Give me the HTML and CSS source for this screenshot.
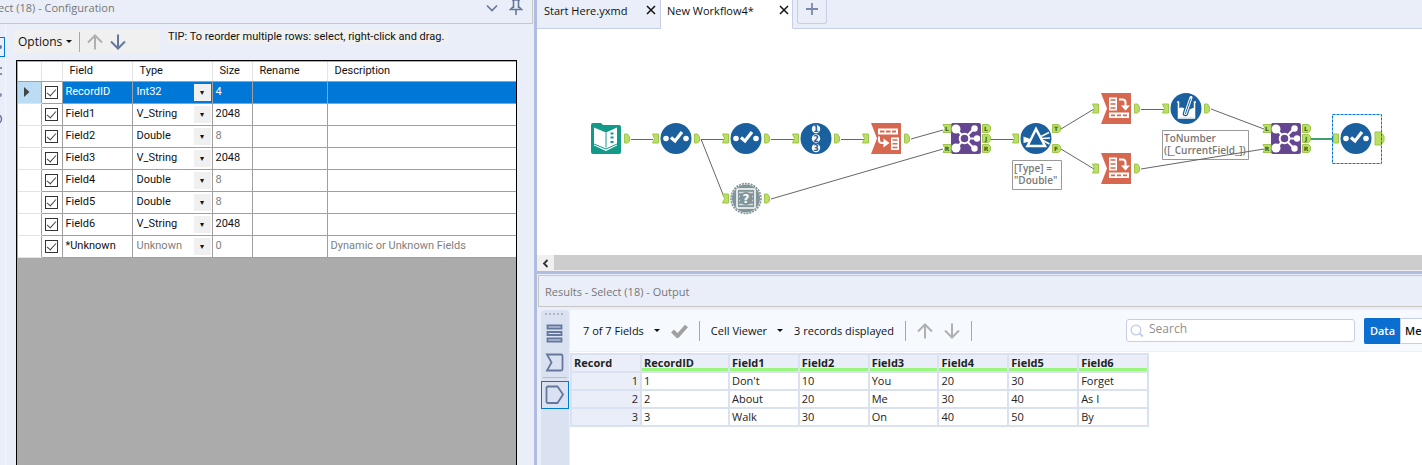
FILE: index.html
```html
<!DOCTYPE html>
<html lang="en">
<head>
<meta charset="utf-8">
<title>Workflow Designer</title>
<link rel="stylesheet" href="styles.css">
</head>
<body>
<div class="app">
  <section class="config">
    <header class="config-head">
      <span class="config-title">Select (18) - Configuration</span>
      <button class="icon-btn" aria-label="Collapse"><svg width="12" height="8"><path d="M1 1.500 6 6.500 11 1.500" fill="none" stroke="#66779d" stroke-width="1.600"/></svg></button>
      <button class="icon-btn" aria-label="Pin"><svg width="14" height="17"><path d="M3 1h8M4.500 1v8M9.500 1v8M4.500 7.500 1.500 10.500h11L9.500 7.500M7 10.500V16" fill="none" stroke="#66779d" stroke-width="1.600"/></svg></button>
    </header>
    <div class="config-body">
      <nav class="rail">
        <button class="rail-btn rail-on" aria-label="Configuration"><svg width="5" height="18"><circle cx="0" cy="9" r="2" fill="#66779d"/></svg></button>
        <button class="rail-btn" aria-label="Annotation"><svg width="5" height="18"><path d="M0 6h2M0 12h2" stroke="#8592ae" stroke-width="2"/></svg></button>
        <button class="rail-btn" aria-label="XML"><svg width="5" height="18"><circle cx="0" cy="9" r="2" fill="#8592ae"/></svg></button>
        <button class="rail-btn" aria-label="Help"><svg width="5" height="18"><circle cx="-3" cy="9" r="4.500" fill="none" stroke="#66779d" stroke-width="1.500"/></svg></button>
      </nav>
      <div class="config-main">
        <div class="config-tools">
          <div class="options-bar">
            <button class="menu-btn">Options<i class="caret"></i></button>
            <span class="rule"></span>
            <button class="icon-btn" aria-label="Move up"><svg width="16" height="16"><path d="M8 15.500V2M1 8.500 8 1.500l7 7" fill="none" stroke="#b0b0b0" stroke-width="2"/></svg></button>
            <button class="icon-btn" aria-label="Move down"><svg width="16" height="16"><path d="M8 .5V14M1 7.500l7 7 7-7" fill="none" stroke="#66779d" stroke-width="2"/></svg></button>
          </div>
          <p class="tip">TIP: To reorder multiple rows: select, right-click and drag.</p>
        </div>
        <div class="grid-box">
          <table class="fields">
            <colgroup><col class="c-mark"><col class="c-check"><col class="c-field"><col class="c-type"><col class="c-size"><col class="c-rename"><col></colgroup>
            <thead><tr><th></th><th></th><th>Field</th><th>Type</th><th>Size</th><th>Rename</th><th>Description</th></tr></thead>
            <tbody>
              <tr class="current"><td class="mark"><svg width="6" height="10"><path d="M0 0l5.500 5L0 10z" fill="#444"/></svg></td><td><input type="checkbox" aria-label="RecordID" checked></td><td>RecordID</td><td><div class="pick"><select aria-label="Type of RecordID"><option>Int32</option></select></div></td><td>4</td><td></td><td></td></tr>
              <tr><td class="mark"></td><td><input type="checkbox" aria-label="Field1" checked></td><td>Field1</td><td><div class="pick"><select aria-label="Type of Field1"><option>V_String</option></select></div></td><td>2048</td><td></td><td></td></tr>
              <tr><td class="mark"></td><td><input type="checkbox" aria-label="Field2" checked></td><td>Field2</td><td><div class="pick"><select aria-label="Type of Field2"><option>Double</option></select></div></td><td class="dim">8</td><td></td><td></td></tr>
              <tr><td class="mark"></td><td><input type="checkbox" aria-label="Field3" checked></td><td>Field3</td><td><div class="pick"><select aria-label="Type of Field3"><option>V_String</option></select></div></td><td>2048</td><td></td><td></td></tr>
              <tr><td class="mark"></td><td><input type="checkbox" aria-label="Field4" checked></td><td>Field4</td><td><div class="pick"><select aria-label="Type of Field4"><option>Double</option></select></div></td><td class="dim">8</td><td></td><td></td></tr>
              <tr><td class="mark"></td><td><input type="checkbox" aria-label="Field5" checked></td><td>Field5</td><td><div class="pick"><select aria-label="Type of Field5"><option>Double</option></select></div></td><td class="dim">8</td><td></td><td></td></tr>
              <tr><td class="mark"></td><td><input type="checkbox" aria-label="Field6" checked></td><td>Field6</td><td><div class="pick"><select aria-label="Type of Field6"><option>V_String</option></select></div></td><td>2048</td><td></td><td></td></tr>
              <tr><td class="mark"></td><td><input type="checkbox" aria-label="Unknown" checked></td><td>*Unknown</td><td class="dim"><div class="pick"><select aria-label="Type of Unknown"><option>Unknown</option></select></div></td><td class="dim">0</td><td></td><td class="dim">Dynamic or Unknown Fields</td></tr>
            </tbody>
          </table>
        </div>
      </div>
    </div>
  </section>

  <main class="work">
    <nav class="tabs">
      <div class="tab"><a href="#start">Start Here.yxmd</a><button class="icon-btn" aria-label="Close Start Here"><svg width="10" height="10"><path d="M1 1l8 8M9 1 1 9" stroke="#111" stroke-width="1.500"/></svg></button></div>
      <div class="tab tab-on"><a href="#flow">New Workflow4*</a><button class="icon-btn" aria-label="Close New Workflow4"><svg width="10" height="10"><path d="M1 1l8 8M9 1 1 9" stroke="#111" stroke-width="1.500"/></svg></button></div>
      <div class="tab-rest"><button class="add-tab" aria-label="New tab"><svg width="14" height="14"><path d="M7 1v12M1 7h12" stroke="#7b8aa8" stroke-width="1.800"/></svg></button></div>
    </nav>
    <div class="canvas">
      <svg class="flow" width="885" height="226" viewBox="537 29 885 226" role="img" aria-label="Workflow">
        <defs>
          <path id="out" d="M18.500-4.500h3l2 3v4l-2 2h-3z" class="port"/>
          <path id="in" d="M-23.500-4.500h6v9h-6l2-4.500z" class="port"/>
          <g id="select">
            <circle r="15.500" class="blue"/>
            <circle cx="-10" cy="0" r="2.800" fill="#fff"/><circle cx="10" cy="0" r="2.800" fill="#fff"/>
            <path d="M-5-1 -1 2.500 6-6.500" fill="none" stroke="#fff" stroke-width="3.200"/>
          </g>
          <g id="join">
            <rect x="-15" y="-15.500" width="30" height="31" rx="2" fill="#644691"/>
            <path d="M-1.500 0-10-10M-1.500 0-10 10M-1.500 0 8-10M-1.500 0H11M-1.500 0 8 10" stroke="#fff" stroke-width="2"/>
            <circle cx="-10" cy="-9.500" r="4.500" fill="#fff"/><circle cx="-10" cy="9.500" r="4.500" fill="#fff"/>
            <circle cx="8.500" cy="-10" r="3.200" fill="#fff"/><circle cx="11" cy="0" r="3.200" fill="#fff"/><circle cx="8.500" cy="10" r="3.200" fill="#fff"/>
            <circle cx="-1.500" cy="0" r="4.800" fill="#644691" stroke="#fff" stroke-width="2"/>
            <path d="M-23-14h8v8h-8l2-4zM-23 6h8v8h-8l2-4zM16.500-14h6l2 2v4l-2 2h-6zM16.500-4h6l2 2v4l-2 2h-6zM16.500 6h6l2 2v4l-2 2h-6z" class="port"/>
            <text x="-19" y="-8" class="letter">L</text><text x="-19" y="12" class="letter">R</text>
            <text x="20" y="-8" class="letter">L</text><text x="20" y="2" class="letter">J</text><text x="20" y="12" class="letter">R</text>
          </g>
          <g id="transpose">
            <path d="M-15-15.500h30v31h-30L-9 0z" fill="#d6684f"/>
            <path d="M-7-11h8v13h-8z" fill="#fff"/><path d="M-5.500-8.500h5M-5.500-4.500h5M-5.500-.5h5" stroke="#d6684f" stroke-width="1.500"/>
            <path d="M3-9h3.500q3 0 3 3V-2" fill="none" stroke="#fff" stroke-width="2"/><path d="M5-3h9L9.500 2z" fill="#fff"/>
            <path d="M-7 4h20v5.500H-7z" fill="#fff"/><path d="M-5 6.800h4M1 6.800h4M7 6.800h4" stroke="#d6684f" stroke-width="1.800"/>
          </g>
        </defs>

        <g class="wires">
          <path d="M631 139.500H653M701 139.500H724M701 139 724 197M771 139.500H794M841 139.500H865M911 139 943 130M771 199 943 149M991 139.500H1015M1061 129 1094 109M1061 149 1094 169M1141 109.500H1164M1211 109 1264 129"/>
        </g>

        <g transform="translate(606 138.500)">
          <path d="M-15-13.500q0-2 2-2h8l2 2h16q2 0 2 2V13.500q0 2-2 2h-26q-2 0-2-2z" fill="#109a87"/>
          <path d="M-12-11 0-6 11-11V7L0 12.500-12 7z" fill="#fff"/>
          <path d="M0-6V9M-12 5.500 0 10.500 11 5.500" fill="none" stroke="#109a87"/>
          <path d="M4.500-5h3M4.500-1h3M4.500 3.500h3" stroke="#109a87" stroke-width="2"/>
          <use href="#out"/>
        </g>
        <g transform="translate(676 138.500)"><use href="#in"/><use href="#select"/><use href="#out"/></g>
        <g transform="translate(746 138.500)"><use href="#in"/><use href="#select"/><use href="#out"/></g>
        <g transform="translate(816 138.500)"><use href="#in"/><circle r="15.500" class="blue"/>
          <circle cy="-9.500" r="4.200" fill="#fff"/><circle r="4.200" fill="#fff"/><circle cy="9.500" r="4.200" fill="#fff"/>
          <text y="-6.500" class="digit">1</text><text y="3" class="digit">2</text><text y="12.500" class="digit">3</text><use href="#out"/></g>
        <g transform="translate(886 138.500)"><use href="#in"/>
          <path d="M-15-15.500h30v31h-30L-9 0z" fill="#d6684f"/>
          <path d="M-8-10H12v6H-8z" fill="#fff"/><path d="M-6-7h4.500M0-7h4.500M6-7h4" stroke="#d6684f" stroke-width="2"/>
          <path d="M5-1h8v12.500H5z" fill="#fff"/><path d="M6.500 1.500h5M6.500 5.300h5M6.500 9h5" stroke="#d6684f" stroke-width="1.500"/>
          <path d="M-7-2V1.500q0 3 3 3h2" fill="none" stroke="#fff" stroke-width="2"/><path d="M-2.500 0v9L3.500 4.500z" fill="#fff"/>
          <use href="#out"/></g>
        <g transform="translate(746 198.500)"><use href="#in"/>
          <circle r="14" fill="#809499"/><circle r="15" fill="none" stroke="#809499" stroke-width="1.600" stroke-dasharray="2 1"/>
          <rect x="-9" y="-9.500" width="18" height="19" rx="1" fill="none" stroke="#fff" stroke-width="1.500"/>
          <path d="M-7-6h14M-7-2h14M-7 2h14M-7 6h14" stroke="#d7dfe1" stroke-width="1.500"/>
          <circle r="6.500" fill="#809499"/><text y="4.500" class="question">?</text><use href="#out"/></g>
        <use href="#join" x="966" y="138.500"/>
        <g transform="translate(1036 138.500)"><use href="#in"/><circle r="15.500" class="blue"/>
          <path d="M-12.500-2V4.500L-2 2z" fill="#fff"/><path d="M0-9.500-8.500 7.500H9z" fill="#1a609f" stroke="#fff" stroke-width="2.500"/>
          <path d="M5-2 13-6M6 0l8-.5M7 2l6.500 3.500" stroke="#fff" stroke-width="1.500"/>
          <path d="M16.500-14h6l2 2v4l-2 2h-6zM16.500 6h6l2 2v4l-2 2h-6z" class="port"/>
          <text x="20" y="-8" class="letter">T</text><text x="20" y="12" class="letter">F</text></g>
        <g transform="translate(1116 108.500)"><use href="#in"/><use href="#transpose"/><use href="#out"/></g>
        <g transform="translate(1116 168.500)"><use href="#in"/><use href="#transpose"/><use href="#out"/></g>
        <g transform="translate(1186 108.500)"><use href="#in"/><circle r="15.500" class="blue"/>
          <path d="M-9-6.500h1.500V9.500H8.500V-6.500H10" fill="none" stroke="#fff" stroke-width="1.500"/><path d="M-7.500 0q3-2 6 0 4 2 10-1v10h-16z" fill="#fff"/>
          <path d="M4.500-10.500-.5 5" stroke="#1a609f" stroke-width="5.500" stroke-linecap="round"/><path d="M5-11-.5 5" stroke="#fff" stroke-width="3" stroke-linecap="round"/><path d="M4.500-9.500-.5 5" stroke="#1a609f" stroke-linecap="round"/>
          <use href="#out"/></g>

        <g class="note"><path d="M1012.500 160.500h49v29h-49z"/><text x="1014" y="172">[Type] =</text><text x="1014" y="184">"Double"</text></g>
        <g class="note"><path d="M1162.500 130.500h86v29h-86z"/><text x="1164" y="142">ToNumber</text><text x="1164" y="154">([_CurrentField_])</text></g>
        <path d="M1141 169 1264 149" class="wires"/>
        <path d="M1310 139H1334" stroke="#128a4a" stroke-width="1.600"/>
        <use href="#join" x="1286" y="138.500"/>
        <g transform="translate(1356 138.500)"><path d="M-22.500-4.500h5v9h-5z" class="port"/><use href="#select"/><path d="M19-6.500h6l3 4v5l-3 4h-6z" class="port"/></g>
        <rect x="1332.500" y="114.500" width="49" height="49" fill="none" stroke="#0078d7" stroke-dasharray="3 1"/>
      </svg>
    </div>
    <div class="scroll"><button class="scroll-btn" aria-label="Scroll left"><svg width="7" height="9"><path d="M5.500 1 2 4.500 5.500 8" fill="none" stroke="#333" stroke-width="1.800"/></svg></button><div class="thumb"></div></div>

    <section class="results">
      <header class="results-head">Results - Select (18) - Output</header>
      <div class="results-body">
        <nav class="side">
          <span class="grip"></span>
          <button class="side-btn" aria-label="Messages"><svg width="18" height="20"><path d="M1.500 1.500h14v3h-14zM1.500 8h14v3h-14zM1.500 14.500h14v3h-14z" fill="none" stroke="#66779d" stroke-width="1.800"/></svg></button>
          <button class="side-btn" aria-label="Input"><svg width="20" height="20"><path d="M2 1.500h14q1.500 0 1.500 1.500v13q0 1.500-1.500 1.500H2L6.500 9.500z" fill="none" stroke="#66779d" stroke-width="1.800"/></svg></button>
          <span class="side-rule"></span>
          <button class="side-btn side-on" aria-label="Output"><svg width="20" height="20"><path d="M3 1.500h9.500L18 9.500 12.500 18H3q-1.500 0-1.500-1.500V3Q1.500 1.500 3 1.500z" fill="none" stroke="#66779d" stroke-width="1.800"/></svg></button>
        </nav>
        <div class="results-main">
          <div class="results-tools">
            <button class="menu-btn wide">7 of 7 Fields<i class="caret"></i></button>
            <button class="icon-btn" aria-label="Apply"><svg width="17" height="14"><path d="M1.500 7l5 5L15.500 2" fill="none" stroke="#a0a0a0" stroke-width="4"/></svg></button>
            <span class="rule"></span>
            <button class="menu-btn wide">Cell Viewer<i class="caret"></i></button>
            <span>3 records displayed</span>
            <span class="rule"></span>
            <button class="icon-btn" aria-label="Previous"><svg width="16" height="16"><path d="M8 15.500V2M1 8.500 8 1.500l7 7" fill="none" stroke="#b0b0b0" stroke-width="2"/></svg></button>
            <button class="icon-btn" aria-label="Next"><svg width="16" height="16"><path d="M8 .5V14M1 7.500l7 7 7-7" fill="none" stroke="#b0b0b0" stroke-width="2"/></svg></button>
            <span class="rule rule-last"></span>
            <label class="search"><svg width="14" height="14"><circle cx="6" cy="6" r="4.800" fill="none" stroke="#c5d0e8" stroke-width="1.500"/><path d="M9.500 9.500 13 12.500" stroke="#c5d0e8" stroke-width="2"/></svg><input type="text" placeholder="Search" aria-label="Search"></label>
            <div class="switch"><button class="seg seg-on">Data</button><button class="seg">Me</button></div>
          </div>
          <table class="output">
            <colgroup><col class="o-rec"><col class="o-id"><col><col><col><col><col><col></colgroup>
            <thead><tr><th class="rec">Record</th><th>RecordID</th><th>Field1</th><th>Field2</th><th>Field3</th><th>Field4</th><th>Field5</th><th>Field6</th></tr></thead>
            <tbody>
              <tr><th class="rec">1</th><td>1</td><td>Don't</td><td>10</td><td>You</td><td>20</td><td>30</td><td>Forget</td></tr>
              <tr><th class="rec">2</th><td>2</td><td>About</td><td>20</td><td>Me</td><td>30</td><td>40</td><td>As I</td></tr>
              <tr><th class="rec">3</th><td>3</td><td>Walk</td><td>30</td><td>On</td><td>40</td><td>50</td><td>By</td></tr>
            </tbody>
          </table>
        </div>
      </div>
    </section>
  </main>
</div>
</body>
</html>
```
FILE: styles.css
```css
* { box-sizing: border-box; }
body { margin: 0; font: 11px/16px "Open Sans", "Noto Sans", sans-serif; color: #111; }
button, input, select { font: inherit; color: inherit; margin: 0; }
button { padding: 0; border: 0; background: none; }
svg { display: block; flex: none; }
a { color: inherit; text-decoration: none; }

.app { display: grid; grid-template-columns: 537px minmax(0, 1fr); height: 100vh; overflow: hidden; }
.icon-btn { flex: none; }
.caret { width: 0; border: 3px solid transparent; border-top-color: #111; border-bottom: 0; }
.rule { width: 1px; height: 20px; background: #a8a8a8; flex: none; }
.menu-btn { display: flex; align-items: center; gap: 4px; white-space: nowrap; }

/* configuration pane */
.config { display: flex; flex-direction: column; background: #eaeef8; border-right: 3px solid #afbde0; min-width: 0; }
.config-head { display: flex; align-items: center; gap: 11px; height: 24px; margin-right: 1px; padding: 0 9px 8px 0; border: solid #c6c6c6; border-width: 0 1px 1px 0; color: #767676; white-space: nowrap; flex: none; }
.config-title { margin-left: -17px; flex: 1; }
.config-body { display: flex; flex: 1; min-height: 0; }
.rail { display: flex; flex-direction: column; gap: 4px; width: 6px; padding-top: 13px; border-right: 1px solid #f3f6fc; }
.rail-btn { height: 20px; width: 5px; overflow: hidden; }
.rail-on { border: solid #0078d7; border-width: 1px 1px 1px 0; }
.config-main { display: flex; flex-direction: column; flex: 1; padding: 6px 17px 0 7px; }
.config-tools { display: flex; gap: 8px; height: 30px; align-items: flex-start; }
.options-bar { display: flex; align-items: center; gap: 7px; width: 147px; height: 23px; padding-left: 5px; background: #f0f0f0; font-size: 12px; }
.tip { margin: 0; padding-right: 4px; background: #f0f0f0; font: 11px/14px Roboto, "Liberation Sans", sans-serif; white-space: nowrap; }

.grid-box { flex: 1; margin-left: 3px; border: solid #000; border-width: 1px 1px 0; padding: 1px 0 0 1px; background: #ababab; }
.fields { width: 100%; table-layout: fixed; border-collapse: collapse; font: 11px/14px Roboto, "Liberation Sans", sans-serif; background: #fff; }
.c-mark { width: 23px; } .c-check { width: 21px; } .c-field { width: 70px; } .c-type { width: 80px; } .c-size { width: 40px; } .c-rename { width: 75px; }
.fields th { height: 19px; padding: 0 7px; font-weight: 400; text-align: left; border: solid #e3e3e3; border-width: 0 1px; border-bottom: 1px solid #a0a0a0; }
.fields td { height: 22px; padding: 0 3px; border: 1px solid #a0a0a0; white-space: nowrap; }
.fields tr > :first-child { border-left: 0; }
.fields tr > :last-child { border-right: 0; }
.fields .mark { border-top-color: #e3e3e3; border-bottom-color: #e3e3e3; padding-left: 6px; }
.current td { background: #0078d7; color: #fff; }
.fields .current td:nth-child(2) { background: #fff; }
.fields .current .mark { background: #bcdcf4; }
.fields .dim { color: #808080; }
.fields input { display: grid; place-items: center; width: 13px; height: 13px; appearance: none; background: #fff; border: 1px solid #333; }
.fields input:checked::before { content: ""; width: 4px; height: 8px; margin-bottom: 2px; border: solid #444; border-width: 0 1px 1px 0; transform: rotate(42deg); }
.pick { display: flex; align-items: center; }
.pick select { flex: 1; min-width: 0; appearance: none; border: 0; background: none; padding: 0 0 0 1px; }
.pick::after { content: "▾"; width: 17px; height: 17px; margin-right: -2px; background: #f0f0f0; color: #111; text-align: center; font: 8px/17px "DejaVu Sans", sans-serif; }

/* workflow area */
.work { display: flex; flex-direction: column; min-width: 0; background: #fff; }
.tabs { display: flex; height: 29px; flex: none; background: #eaeef8; }
.tab { display: flex; justify-content: space-between; width: 124px; padding: 3px 4px 0 7px; border: solid #c5d0e8; border-width: 0 1px 1px 0; white-space: nowrap; }
.tab svg { margin-top: 2px; }
.tab .icon-btn { align-self: flex-start; }
.tab-on { width: 132px; padding-left: 6px; padding-right: 3px; background: #fff; border-bottom-color: #fff; }
.tab-rest { flex: 1; padding-left: 4px; border-bottom: 1px solid #c5d0e8; }
.add-tab { display: grid; place-items: center; width: 30px; height: 24px; padding-bottom: 6px; border: 1px solid #c5d0e8; border-top: 0; border-radius: 0 0 3px 3px; }
.canvas { height: 226px; flex: none; overflow: hidden; }
.blue { fill: #1a609f; }
.port { fill: #b9e063; stroke: #9fc54f; stroke-width: 1; }
.wires { fill: none; stroke: #666; stroke-width: 1; }
.letter { font: bold 6px "DejaVu Sans", sans-serif; fill: #3c5a1c; text-anchor: middle; }
.digit { font: bold 8px "DejaVu Sans", sans-serif; fill: #1a609f; text-anchor: middle; }
.question { font: bold 12px "DejaVu Sans", sans-serif; fill: #fff; text-anchor: middle; }
.note path { fill: #fff; stroke: #999; }
.note text { font: 600 10px "Open Sans", sans-serif; fill: #777; }
.scroll { display: flex; height: 16px; flex: none; background: #f0f0f0; }
.scroll-btn { display: grid; place-items: center; width: 17px; }
.thumb { flex: 1; margin-bottom: 1px; background: #cdcdcd; }

/* results pane */
.results { display: flex; flex-direction: column; flex: 1; min-height: 0; padding: 1px 0 0 1px; border-top: 3px solid #afbde0; background: #eaeef8; }
.results-head { height: 32px; padding: 8px 6px; border: 1px solid #c8c6c5; border-right: 0; color: #767676; flex: none; }
.results-body { display: flex; flex: 1; min-height: 0; padding: 3px 0 0 3px; }
.side { display: flex; flex-direction: column; align-items: center; width: 28px; background: #dae2f1; border-radius: 4px 4px 0 0; }
.grip { width: 20px; height: 2px; margin: 3px 0 4px; background: repeating-linear-gradient(90deg, #b4b7be 0 2px, transparent 2px 4px); }
.side-btn { display: grid; place-items: center; width: 28px; height: 29px; flex: none; }
.side-rule { width: 24px; height: 1px; margin: 0 0 3px; background: #bbb; flex: none; }
.side-on { height: 28px; border: 1px solid #0078d7; }
.results-main { flex: 1; min-width: 0; margin-left: 1px; background: #fff; overflow: hidden; }
.results-tools { display: flex; align-items: center; gap: 11px; height: 42px; padding-left: 13px; background: #f6faff; border-bottom: 1px solid #eef2f8; white-space: nowrap; }
.wide { gap: 10px; }
.rule-last { margin-right: auto; }
.search { display: flex; align-items: center; gap: 5px; width: 229px; height: 23px; padding: 0 3px; border: 1px solid #c5d0e8; border-radius: 3px; background: #fff; font-size: 12px; }
.search input { flex: 1; min-width: 0; padding: 0 0 4px; border: 0; background: none; }
.search input::placeholder { color: #8f8f8f; }
.switch { display: flex; width: 58px; height: 26px; margin-left: -2px; font-weight: 600; }
.seg { padding: 0 4px; background: #fff; border: 1px solid #c5d0e8; border-right: 0; flex: 1; }
.seg-on { flex: none; width: 36px; background: #0a6fd0; border-color: #0a6fd0; color: #fff; border-radius: 2px 0 0 2px; }

.output { margin-top: 1px; width: 579px; table-layout: fixed; border-collapse: collapse; color: #222; line-height: 14px; }
.o-rec { width: 70px; } .o-id { width: 88px; }
.output th, .output td { height: 18px; padding: 0 2px; border: 2px solid #dae2f1; text-align: left; white-space: nowrap; }
.output th { background: #eaeef8; }
.output thead th { font-weight: 700; box-shadow: inset 0 -3px #99f77d; }
.output thead .rec { box-shadow: none; }
.output tbody .rec { text-align: right; font-weight: 400; }
```
